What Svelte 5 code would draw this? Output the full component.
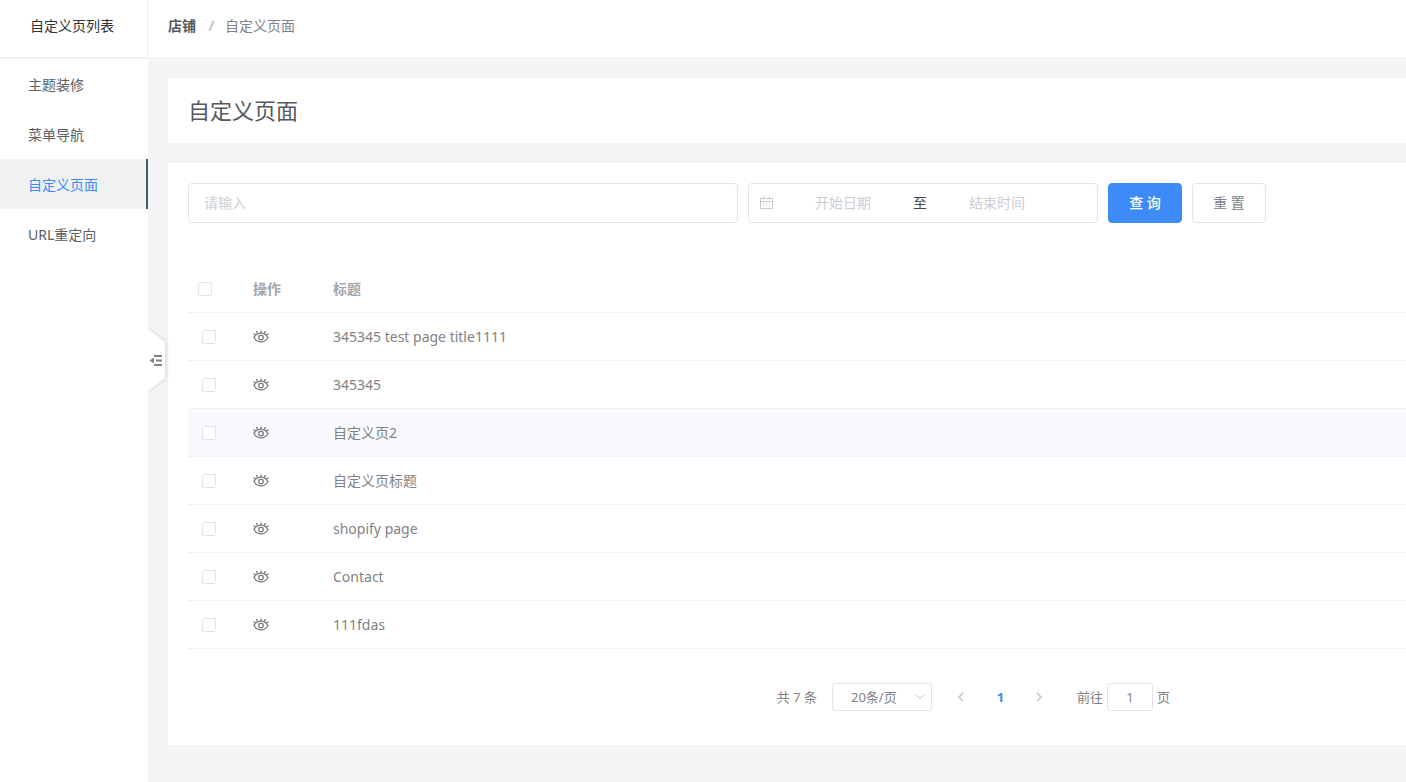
<script>
    let menus = ['主题装修', '菜单导航', '自定义页面', 'URL重定向'];
    let current = '自定义页面';

    let rows = [
        { id: 1, title: '345345 test page title1111' },
        { id: 2, title: '345345' },
        { id: 3, title: '自定义页2' },
        { id: 4, title: '自定义页标题' },
        { id: 5, title: 'shopify page' },
        { id: 6, title: 'Contact' },
        { id: 7, title: '111fdas' }
    ];
    let hovered = 3;

    let keyword = '';
    let startDate = '';
    let endDate = '';
    let page = '1';

    function reset() {
        keyword = '';
        startDate = '';
        endDate = '';
    }
</script>

<div class="layout">
    <aside class="sidebar">
        <div class="sidebar-title">自定义页列表</div>
        <nav>
            {#each menus as menu}
                <a href="#/{menu}" class="menu-item" class:active={menu === current}>{menu}</a>
            {/each}
        </nav>
        <button class="collapse" aria-label="收起">
            <svg width="22" height="70" viewBox="0 0 22 70">
                <path class="handle" d="M0 4 L17 17 V53 L0 66 Z" />
                <path d="M6 31H14M8 35.5H14M6 40H14" stroke="#808285" stroke-width="1.8" />
                <path d="M1.5 35.5L6 32.5V38.5Z" fill="#808285" />
            </svg>
        </button>
    </aside>

    <div class="main">
        <header class="topbar">
            <a href="#/shop" class="crumb">店铺</a>
            <span class="slash">/</span>
            <span>自定义页面</span>
        </header>

        <main class="content">
            <section class="card title-card">
                <h1>自定义页面</h1>
            </section>

            <section class="card">
                <form class="filters" on:submit|preventDefault>
                    <input class="box keyword" type="text" placeholder="请输入" aria-label="请输入" bind:value={keyword} />
                    <div class="box date-range">
                        <svg width="14" height="14" viewBox="0 0 14 14" fill="none" stroke="#c6c9d0">
                            <path d="M1.5 2.5H13.5V12.5H1.5ZM1.5 5.5H13.5M4.5 .5V3.5M10.5 .5V3.5" />
                            <path d="M4 7.5H5M7 7.5H8M10 7.5H11M4 10H5M7 10H8M10 10H11" />
                        </svg>
                        <input type="text" placeholder="开始日期" aria-label="开始日期" bind:value={startDate} />
                        <span class="to">至</span>
                        <input type="text" placeholder="结束时间" aria-label="结束时间" bind:value={endDate} />
                    </div>
                    <button class="btn primary" type="submit">查 询</button>
                    <button class="btn" type="button" on:click={reset}>重 置</button>
                </form>

                <table>
                    <thead>
                        <tr>
                            <th class="col-check"><input type="checkbox" aria-label="全选" /></th>
                            <th class="col-action">操作</th>
                            <th>标题</th>
                        </tr>
                    </thead>
                    <tbody>
                        {#each rows as row (row.id)}
                            <tr class:hovered={row.id === hovered}>
                                <td class="col-check"><input type="checkbox" aria-label={row.title} /></td>
                                <td>
                                    <button class="view" aria-label="查看">
                                        <svg width="16" height="16" viewBox="0 0 16 16" fill="none" stroke="#808285" stroke-width="1.4">
                                            <path d="M1 8.5C4.2 2.7 11.8 2.7 15 8.5C11.8 14.3 4.2 14.3 1 8.5Z" />
                                            <circle cx="8" cy="8.5" r="2.3" />
                                            <path d="M8 4V1.5M4.6 4.8L3.6 2M11.4 4.8L12.4 2M2.6 6.3L.6 4.4M13.4 6.3L15.4 4.4" />
                                        </svg>
                                    </button>
                                </td>
                                <td>{row.title}</td>
                            </tr>
                        {/each}
                    </tbody>
                </table>

                <div class="pagination">
                    <span class="total">共 {rows.length} 条</span>
                    <div class="size">
                        <select aria-label="每页条数">
                            <option>20条/页</option>
                            <option>50条/页</option>
                        </select>
                        <svg width="10" height="6" viewBox="0 0 10 6" fill="none" stroke="#c0c4cc">
                            <path d="M1 .8L5 4.8L9 .8" />
                        </svg>
                    </div>
                    <button class="arrow" aria-label="上一页" disabled>
                        <svg width="8" height="10" viewBox="0 0 8 10" fill="none" stroke="#c0c4cc" stroke-width="1.6">
                            <path d="M6 1L2 5L6 9" />
                        </svg>
                    </button>
                    <button class="page-no">1</button>
                    <button class="arrow" aria-label="下一页" disabled>
                        <svg width="8" height="10" viewBox="0 0 8 10" fill="none" stroke="#c0c4cc" stroke-width="1.6">
                            <path d="M2 1L6 5L2 9" />
                        </svg>
                    </button>
                    <label class="jump">
                        前往
                        <input type="text" bind:value={page} />
                        页
                    </label>
                </div>
            </section>
        </main>
    </div>
</div>

<style>
    :global(body) {
        background: #f3f4f6;
    }

    .layout,
    input,
    select,
    button {
        font-family: 'Noto Sans', 'Noto Sans CJK SC', sans-serif;
        font-size: 14px;
    }

    .layout {
        display: flex;
        min-height: 100vh;
        line-height: 20px;
        color: #808285;
    }
    .layout * {
        box-sizing: border-box;
    }

    a {
        text-decoration: none;
    }
    button {
        padding: 0;
        border: 0;
        background: none;
        cursor: pointer;
    }

    .sidebar {
        position: relative;
        flex: none;
        width: 148px;
        background: #fff;
    }
    .sidebar-title {
        height: 59px;
        padding: 16px 0 0 30px;
        border-right: 1px solid #ebeef2;
        border-bottom: 2px solid #eef0f4;
        color: #303133;
    }
    .menu-item {
        display: block;
        height: 50px;
        padding: 16px 0 0 28px;
        color: #5c5f63;
    }
    .menu-item.active {
        border-right: 2px solid #495a6b;
        background: #f0f2f2;
        color: #3d8bf8;
    }
    .collapse {
        position: absolute;
        top: 325px;
        left: 148px;
        height: 70px;
    }
    .handle {
        fill: #fff;
        filter: drop-shadow(1px 0 2px rgba(0, 0, 0, 0.12));
    }

    .main {
        flex: 1;
        min-width: 0;
    }
    .topbar {
        display: flex;
        height: 57px;
        padding: 16px 20px;
        background: #fff;
    }
    .crumb {
        font-weight: 700;
        color: #55585c;
    }
    .slash {
        width: 29px;
        padding-left: 2px;
        text-align: center;
        font-weight: 700;
        color: #c0c4cc;
    }

    .content {
        display: flex;
        flex-direction: column;
        gap: 20px;
        padding: 21px 0 20px 20px;
    }
    .card {
        padding: 20px 0 34px 20px;
        background: #fff;
    }
    .title-card {
        padding: 16px 20px;
    }
    h1 {
        margin: 0;
        font-size: 22px;
        font-weight: 400;
        line-height: 33px;
        color: #55585c;
    }

    .filters {
        display: flex;
        gap: 10px;
        margin-bottom: 42px;
    }
    .box {
        height: 40px;
        border: 1px solid #e2e4e9;
        border-radius: 4px;
        background: #fff;
    }
    .keyword {
        flex: 0 1 550px;
        min-width: 0;
        padding: 0 15px 2px;
    }
    .date-range {
        display: flex;
        flex: none;
        align-items: center;
        width: 350px;
        padding: 0 10px;
    }
    .date-range svg {
        margin-right: 10px;
    }
    .date-range input {
        width: 120px;
        padding: 0 0 2px;
        border: 0;
        text-align: center;
    }
    .to {
        width: 34px;
        text-align: center;
        color: #404347;
    }
    input {
        color: #808285;
        outline: none;
    }
    input::placeholder {
        color: #ccced4;
    }
    .btn {
        flex: none;
        width: 74px;
        height: 40px;
        padding-bottom: 2px;
        border: 1px solid #e2e4e9;
        border-radius: 4px;
        background: #fff;
        color: #808285;
    }
    .btn.primary {
        border-color: #3d8bf8;
        background: #3d8bf8;
        font-weight: 500;
        color: #fff;
    }

    table {
        width: 100%;
        border-collapse: separate;
        border-spacing: 0;
        table-layout: fixed;
    }
    th,
    td {
        height: 48px;
        padding: 0 10px;
        border-bottom: 1px solid #eef0f5;
        text-align: left;
    }
    th {
        color: #a3a6ab;
    }
    .col-check {
        width: 55px;
    }
    td.col-check {
        padding-left: 14px;
    }
    .col-action {
        width: 80px;
    }
    tr.hovered td,
    tbody tr:hover td {
        background: #f7f9fc;
    }
    input[type='checkbox'] {
        display: block;
        width: 14px;
        height: 14px;
        margin: 0;
        border: 1px solid #e0e3e8;
        border-radius: 2px;
        background: #fff;
        appearance: none;
    }
    input[type='checkbox']:checked {
        background: #3d8bf8;
    }
    .view,
    .view svg {
        display: block;
    }

    .pagination {
        display: flex;
        justify-content: flex-end;
        align-items: center;
        margin-top: 34px;
        padding-right: 236px;
        font-size: 13px;
    }
    .pagination input,
    .pagination select,
    .pagination button {
        font-size: 13px;
    }
    .total {
        margin-right: 15px;
    }
    .size {
        position: relative;
        margin-right: 10px;
    }
    .size select {
        display: block;
        width: 100px;
        height: 28px;
        padding-left: 18px;
        border: 1px solid #e2e4e9;
        border-radius: 3px;
        background: #fff;
        color: #808285;
        appearance: none;
    }
    .size svg {
        position: absolute;
        top: 11px;
        right: 7px;
        pointer-events: none;
    }
    .arrow,
    .page-no {
        width: 39px;
        height: 28px;
    }
    .page-no {
        font-weight: 700;
        color: #3d8bf8;
    }
    .jump {
        display: flex;
        align-items: center;
        gap: 4px;
        margin-left: 18px;
    }
    .jump input {
        width: 46px;
        height: 28px;
        border: 1px solid #e2e4e9;
        border-radius: 3px;
        text-align: center;
    }
</style>
